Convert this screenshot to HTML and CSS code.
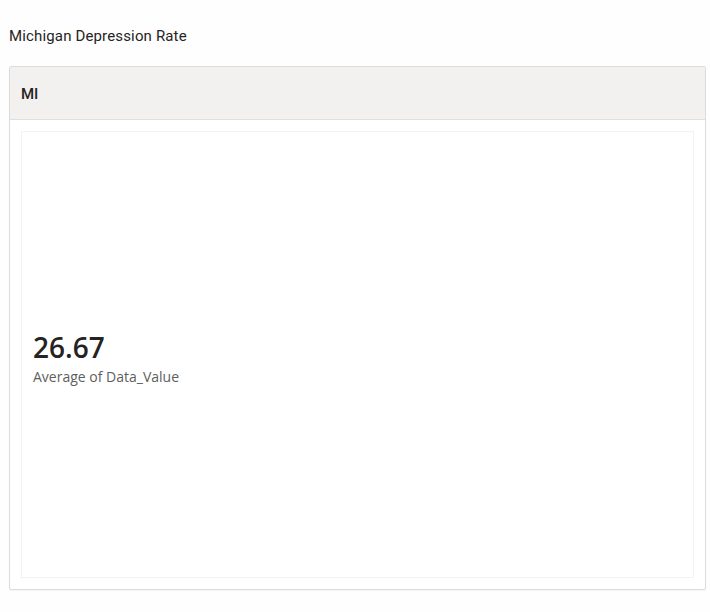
FILE: index.html
```html
<!DOCTYPE html>
<html>
<head>
<meta charset="utf-8">
<link rel="stylesheet" href="styles.css">
</head>
<body>
<div class="page">
  <div class="title">Michigan Depression Rate</div>
  <div class="card">
    <div class="card-header">MI</div>
    <div class="card-body">
      <div class="kpi">
        <div class="kpi-value">26.67</div>
        <div class="kpi-label">Average of Data_Value</div>
      </div>
    </div>
  </div>
</div>
</body>
</html>
```
FILE: styles.css
```css
html, body {
  margin: 0;
  padding: 0;
  background: #fefefe;
}
.page {
  width: 710px;
  height: 612px;
  padding: 0 4px 0 9px;
  box-sizing: border-box;
}
.title {
  font-family: Roboto, "Liberation Sans", sans-serif;
  font-size: 15px;
  color: #252423;
  height: 66px;
  line-height: 72px;
  letter-spacing: 0.15px;
}
.card {
  width: 697px;
  height: 524px;
  box-sizing: border-box;
  border: 1px solid #dcdcdc;
  border-radius: 2px;
  background: #ffffff;
  display: flex;
  flex-direction: column;
  box-shadow: 0 1px 1px rgba(0,0,0,0.04);
}
.card-header {
  height: 52px;
  background: #f2f1ef;
  border-bottom: 1px solid #e1dfdd;
  font-family: Roboto, "Liberation Sans", sans-serif;
  font-weight: 500;
  font-size: 15px;
  color: #252423;
  padding-left: 11px;
  line-height: 54px;
  flex: none;
}
.card-body {
  flex: 1;
  padding: 11px 11px 11px 11px;
  display: flex;
}
.kpi {
  flex: 1;
  border: 1px solid #f3f2f1;
  display: flex;
  flex-direction: column;
  justify-content: center;
  padding-left: 11px;
}
.kpi-value {
  font-family: "Open Sans", "Noto Sans", sans-serif;
  font-size: 28px;
  font-weight: 600;
  color: #252423;
  line-height: 34px;
  margin-top: 8px;
}
.kpi-label {
  font-family: "Open Sans", "Noto Sans", sans-serif;
  font-size: 14px;
  color: #605e5c;
  line-height: 20px;
  margin-top: 3px;
}
```
